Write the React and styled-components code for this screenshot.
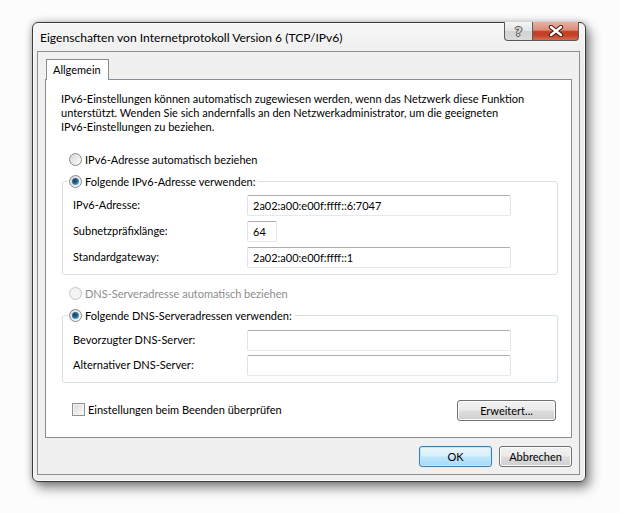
import React from 'react'
import styled, { createGlobalStyle, css } from 'styled-components'

const GlobalStyle = createGlobalStyle`
  html, body {
    margin: 0;
    padding: 0;
    background: #fcfcfc;
  }
  body {
    font-family: Lato, "Noto Sans", sans-serif;
    font-size: 11px;
    color: #000;
  }
  * { box-sizing: border-box; }
`

const Desktop = styled.div`
  width: 620px;
  height: 513px;
  padding: 22px 0 0 32px;
`

const Window = styled.div`
  width: 554px;
  height: 460px;
  display: flex;
  flex-direction: column;
  border: 1px solid #3a3a3a;
  border-radius: 6px;
  background: linear-gradient(#f6f6f6, #ededed 40px, #eeeeee);
  box-shadow: inset 0 0 0 1px #fbfbfb, 4px 6px 12px rgba(0, 0, 0, 0.45), 0 0 7px rgba(0, 0, 0, 0.25);
`

const TitleBar = styled.div`
  height: 28px;
  display: flex;
  justify-content: space-between;
  align-items: flex-start;
  padding: 0 6px 0 7px;
`

const Title = styled.div`
  align-self: center;
  font-size: 12.1px;
`

const CaptionButtons = styled.div`
  display: flex;
  margin-top: -1px;
`

const CaptionButton = styled.div`
  height: 19px;
  display: flex;
  align-items: center;
  justify-content: center;
  border: 1px solid #5a5a5a;
  border-top: none;
  ${p => p.close ? css`
    width: 46px;
    border-left: none;
    border-radius: 0 0 4px 0;
    background: linear-gradient(#eab0a3 0%, #dc8b78 45%, #c5432a 52%, #c23f26 72%, #d66c50 100%);
  ` : css`
    width: 29px;
    border-radius: 0 0 0 4px;
    background: linear-gradient(#f5f5f5 0%, #e4e4e4 48%, #d2d2d2 52%, #dadada 100%);
  `}
`

const HelpGlyph = styled.span`
  font-family: "DejaVu Sans", sans-serif;
  font-weight: bold;
  font-size: 13px;
  color: #d8d8d8;
  text-shadow: -1px 0 #555, 1px 0 #555, 0 -1px #555, 0 1px #555;
  line-height: 1;
`

const Client = styled.div`
  flex: 1;
  margin: 0 5px 6px 4px;
  border: 1px solid #8e8f8f;
  background: #f0f0f0;
  display: flex;
  flex-direction: column;
  padding: 7px 7px 0 7px;
`

const TabStrip = styled.div`
  display: flex;
  padding-left: 1px;
`

const Tab = styled.div`
  height: 21px;
  margin-bottom: -1px;
  position: relative;
  z-index: 1;
  padding: 3px 7px 0 6px;
  background: #fff;
  border: 1px solid #898c95;
  border-bottom: none;
`

const Panel = styled.div`
  height: 359px;
  border: 1px solid #898c95;
  background: #fff;
  padding: 12px 0 0 15px;
`

const Description = styled.p`
  margin: 0;
  line-height: 14px;
  white-space: nowrap;
`

const OptionRow = styled.label`
  display: flex;
  align-items: center;
  height: 16px;
  gap: 3px;
  margin-top: ${p => p.top}px;
  margin-left: ${p => p.indent || 0}px;
  color: ${p => p.disabled ? '#8d8d8d' : '#000'};
`

const RadioDot = styled.span`
  width: 13px;
  height: 13px;
  flex: none;
  border-radius: 50%;
  border: 1px solid ${p => p.disabled ? '#c4c4c4' : '#8a8a8a'};
  background: ${p => p.disabled ? '#f4f4f4' : 'linear-gradient(135deg, #d6d6d6, #fbfbfb)'};
  display: flex;
  align-items: center;
  justify-content: center;
  &::after {
    content: "";
    display: ${p => p.checked ? 'block' : 'none'};
    width: 7px;
    height: 7px;
    border-radius: 50%;
    background: radial-gradient(circle at 40% 40%, #1e3c52 0%, #2a6a92 45%, #59b6e8 80%, #9fd8f4 100%);
  }
`

const CheckBox = styled.span`
  width: 13px;
  height: 13px;
  flex: none;
  border: 1px solid #8e8f8f;
  background: linear-gradient(135deg, #d9d9d9, #fdfdfd);
  box-shadow: inset 0 0 0 1px #f4f4f4;
`

const Group = styled.fieldset`
  width: 496px;
  margin: ${p => p.top}px 0 0 1px;
  padding: ${p => p.padTop}px 0 6px 10px;
  border: 1px solid #d5dfe5;
  border-radius: 3px;
  min-width: 0;
`

const Legend = styled.legend`
  margin-left: -5px;
  padding: 0 3px 0 1px;
`

const LegendOption = styled.span`
  display: flex;
  align-items: center;
  gap: 3px;
  height: 16px;
`

const Fields = styled.div`
  display: grid;
  grid-template-columns: 174px auto;
  row-gap: ${p => p.gap}px;
  align-items: center;
`

const FieldLabel = styled.span`
  white-space: nowrap;
  margin-top: -2px;
`

const TextBox = styled.div`
  width: ${p => p.w}px;
  height: 21px;
  border: 1px solid #e2e3ea;
  border-top-color: #abadb3;
  border-bottom-color: #e3e9ef;
  border-radius: 2px;
  padding: 0 5px 1px;
  display: flex;
  align-items: center;
  background: #fff;
`

const BottomRow = styled.div`
  margin-top: 17px;
  width: 495px;
  display: flex;
  align-items: center;
  justify-content: space-between;
  padding-left: 11px;
`

const CheckLabel = styled.label`
  display: flex;
  align-items: center;
  gap: 3px;
  margin-top: -3px;
`

const Button = styled.button`
  width: ${p => p.w}px;
  height: 21px;
  font: inherit;
  color: #000;
  padding: 0 0 1px;
  border-radius: 3px;
  ${p => p.primary ? css`
    border: 1px solid #3c7fb1;
    background: linear-gradient(#eaf6fd 0%, #d9f0fc 48%, #bee6fd 52%, #a7d9f5 100%);
    box-shadow: inset 0 0 0 1px #bfe7fd, 0 0 1px #7fd0f9;
  ` : css`
    border: 1px solid #707070;
    background: linear-gradient(#f2f2f2 0%, #ebebeb 48%, #dddddd 52%, #cfcfcf 100%);
    box-shadow: inset 0 0 0 1px #fcfcfc;
  `}
`

const Footer = styled.div`
  display: flex;
  justify-content: flex-end;
  gap: 7px;
  margin-top: 8px;
`

const CloseIcon = () => (
  <svg width="16" height="12" viewBox="0 0 16 12">
    <path d="M3 2 L13 10 M13 2 L3 10" stroke="#4a1a10" strokeWidth="4.4" strokeLinecap="round" />
    <path d="M3 2 L13 10 M13 2 L3 10" stroke="#ffffff" strokeWidth="2.4" strokeLinecap="round" />
  </svg>
)

const App = () => (
  <>
    <GlobalStyle />
    <Desktop>
      <Window>
        <TitleBar>
          <Title>Eigenschaften von Internetprotokoll Version 6 (TCP/IPv6)</Title>
          <CaptionButtons>
            <CaptionButton><HelpGlyph>?</HelpGlyph></CaptionButton>
            <CaptionButton close><CloseIcon /></CaptionButton>
          </CaptionButtons>
        </TitleBar>
        <Client>
          <TabStrip>
            <Tab>Allgemein</Tab>
          </TabStrip>
          <Panel>
            <Description>
              IPv6-Einstellungen können automatisch zugewiesen werden, wenn das Netzwerk diese Funktion<br />
              unterstützt. Wenden Sie sich andernfalls an den Netzwerkadministrator, um die geeigneten<br />
              IPv6-Einstellungen zu beziehen.
            </Description>

            <OptionRow top={17} indent={8}>
              <RadioDot />
              IPv6-Adresse automatisch beziehen
            </OptionRow>

            <Group top={6} padTop={6}>
              <Legend>
                <LegendOption><RadioDot checked />Folgende IPv6-Adresse verwenden:</LegendOption>
              </Legend>
              <Fields gap={5}>
                <FieldLabel>IPv6-Adresse:</FieldLabel>
                <TextBox w={264}>2a02:a00:e00f:ffff::6:7047</TextBox>
                <FieldLabel>Subnetzpräfixlänge:</FieldLabel>
                <TextBox w={30}>64</TextBox>
                <FieldLabel>Standardgateway:</FieldLabel>
                <TextBox w={264}>2a02:a00:e00f:ffff::1</TextBox>
              </Fields>
            </Group>

            <OptionRow top={10} indent={8} disabled>
              <RadioDot disabled />
              DNS-Serveradresse automatisch beziehen
            </OptionRow>

            <Group top={6} padTop={7}>
              <Legend>
                <LegendOption><RadioDot checked />Folgende DNS-Serveradressen verwenden:</LegendOption>
              </Legend>
              <Fields gap={4}>
                <FieldLabel>Bevorzugter DNS-Server:</FieldLabel>
                <TextBox w={264} />
                <FieldLabel>Alternativer DNS-Server:</FieldLabel>
                <TextBox w={264} />
              </Fields>
            </Group>

            <BottomRow>
              <CheckLabel>
                <CheckBox />
                Einstellungen beim Beenden überprüfen
              </CheckLabel>
              <Button w={99}>Erweitert...</Button>
            </BottomRow>
          </Panel>
          <Footer>
            <Button w={73} primary>OK</Button>
            <Button w={73}>Abbrechen</Button>
          </Footer>
        </Client>
      </Window>
    </Desktop>
  </>
)

export default App
